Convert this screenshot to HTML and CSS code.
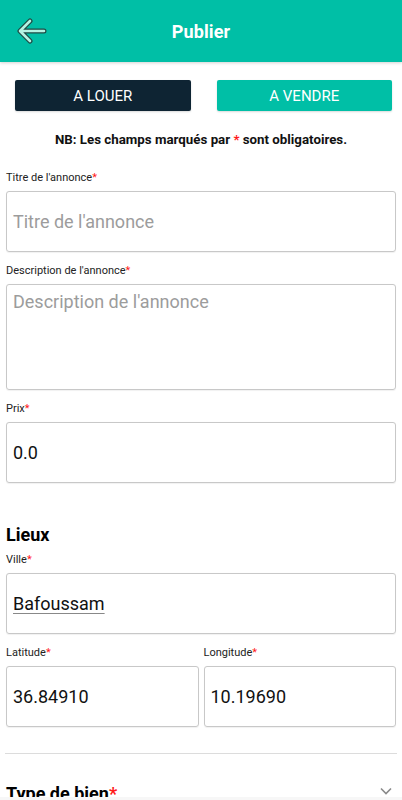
FILE: index.html
```html
<!DOCTYPE html>
<html lang="fr">
<head>
<meta charset="utf-8">
<title>Publier</title>
<link rel="stylesheet" href="styles.css">
</head>
<body>
<header class="appbar">
  <svg class="back" width="30" height="26" viewBox="0 0 30 26">
    <path d="M27 13H4M13 3L3 13l10 10" fill="none" stroke="#1e4a44" stroke-width="5" stroke-linecap="round" stroke-linejoin="round"/>
    <path d="M27 13H4M13 3L3 13l10 10" fill="none" stroke="#b4f3e3" stroke-width="2.6" stroke-linecap="round" stroke-linejoin="round"/>
  </svg>
  <h1 class="title">Publier</h1>
</header>

<main class="content">
  <div class="toggle">
    <button class="tbtn tbtn-dark">A LOUER</button>
    <button class="tbtn tbtn-teal">A VENDRE</button>
  </div>

  <p class="note">NB: Les champs marqués par <span class="req">*</span> sont obligatoires.</p>

  <div class="field">
    <label class="label">Titre de l'annonce<span class="req">*</span></label>
    <div class="box"><span class="ph">Titre de l'annonce</span></div>
  </div>

  <div class="field">
    <label class="label">Description de l'annonce<span class="req">*</span></label>
    <div class="box box-area"><span class="ph">Description de l'annonce</span></div>
  </div>

  <div class="field">
    <label class="label">Prix<span class="req">*</span></label>
    <div class="box"><span class="val">0.0</span></div>
  </div>

  <h2 class="section">Lieux</h2>

  <div class="field field-tight">
    <label class="label">Ville<span class="req">*</span></label>
    <div class="box"><span class="val val-link">Bafoussam</span></div>
  </div>

  <div class="row">
    <div class="field col">
      <label class="label">Latitude<span class="req">*</span></label>
      <div class="box"><span class="val">36.84910</span></div>
    </div>
    <div class="field col">
      <label class="label">Longitude<span class="req">*</span></label>
      <div class="box"><span class="val">10.19690</span></div>
    </div>
  </div>

  <hr class="divider">

  <div class="expander">
    <span class="exp-title">Type de bien<span class="req">*</span></span>
    <svg class="chev" width="12" height="8" viewBox="0 0 12 8"><path d="M1 1.5l5 5 5-5" fill="none" stroke="#8a8a8a" stroke-width="1.6"/></svg>
  </div>
</main>
<div class="navstrip"></div>
</body>
</html>
```

FILE: styles.css
```css
* { box-sizing: border-box; }
html, body { margin: 0; padding: 0; }
body {
  font-family: Roboto, "Noto Sans", "Liberation Sans", sans-serif;
  background: #ffffff;
  color: #111;
  width: 402px;
  height: 800px;
  overflow: hidden;
}
.appbar {
  height: 62px;
  background: #00bfa6;
  display: flex;
  align-items: center;
  justify-content: center;
  position: relative;
  box-shadow: 0 1px 3px rgba(0,0,0,0.18);
}
.back {
  position: absolute;
  left: 17px;
  top: 18px;
}
.title {
  margin: 0;
  color: #fff;
  font-size: 18px;
  font-weight: 700;
  letter-spacing: 0.1px;
}
.content {
  padding: 18px 6px 0 6px;
}
.toggle {
  display: flex;
  gap: 26px;
  padding: 0 4px 0 9px;
}
.tbtn {
  flex: 1;
  height: 31px;
  border: none;
  border-radius: 2px;
  color: #fff;
  font-family: inherit;
  font-size: 15px;
  font-weight: 400;
  padding: 0;
  box-shadow: 0 1px 2px rgba(0,0,0,0.15);
}
.tbtn-dark { background: #0e2433; }
.tbtn-teal { background: #00bfa6; }
.note {
  margin: 21px 0 0 0;
  text-align: center;
  font-size: 13.3px;
  font-weight: 700;
  line-height: 16px;
  color: #111;
}
.req { color: #ff1a1a; }
.field { margin-top: 12px; }
.note + .field { margin-top: 23px; }
.label {
  display: block;
  font-size: 11px;
  line-height: 14px;
  color: #222;
  margin-bottom: 6px;
}
.box {
  height: 61px;
  border: 1px solid #c8c8c8;
  border-radius: 3px;
  display: flex;
  align-items: center;
  padding: 0 6px;
  box-shadow: 0 0.5px 1px rgba(0,0,0,0.06);
}
.box-area {
  height: 106px;
  align-items: flex-start;
  padding-top: 6px;
}
.ph {
  font-size: 18px;
  color: #9c9c9c;
}
.val {
  font-size: 18px;
  color: #111;
}
.val-link {
  text-decoration: underline;
  text-decoration-color: #888;
  text-underline-offset: 3px;
}
.section {
  margin: 40px 0 0 0;
  font-size: 18px;
  line-height: 24px;
  font-weight: 700;
  color: #000;
}
.field-tight { margin-top: 6px; }
.row {
  display: flex;
  gap: 5px;
  margin-top: 12px;
}
.row .field { margin-top: 0; }
.col { flex: 1; }
.divider {
  border: none;
  border-top: 1px solid #dcdcdc;
  margin: 26px -1px 0 -1px;
}
.expander {
  display: flex;
  justify-content: space-between;
  align-items: center;
  margin-top: 29px;
}
.exp-title {
  font-size: 18px;
  font-weight: 700;
  color: #000;
}
.chev { margin-right: 4px; margin-top: -6px; }
.navstrip {
  position: fixed;
  left: 0;
  right: 0;
  bottom: 0;
  height: 3px;
  background: #f7f7f7;
}
```
